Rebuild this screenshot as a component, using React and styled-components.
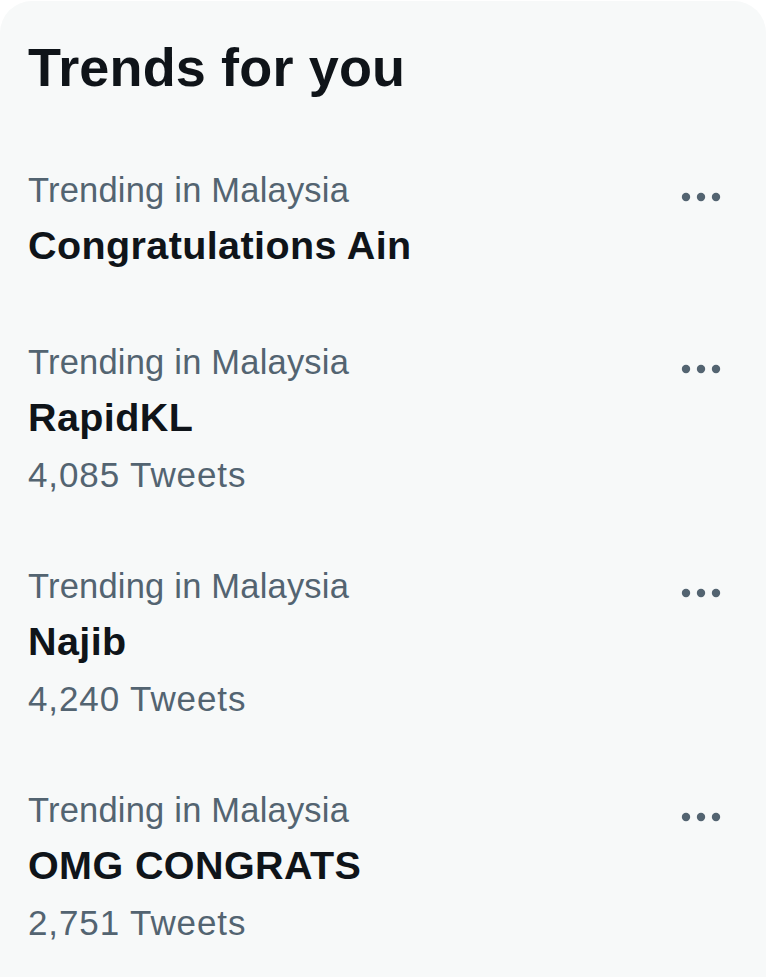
import styled, { createGlobalStyle } from 'styled-components';

const trends = [
  { id: 1, place: 'Trending in Malaysia', name: 'Congratulations Ain' },
  { id: 2, place: 'Trending in Malaysia', name: 'RapidKL', count: '4,085 Tweets' },
  { id: 3, place: 'Trending in Malaysia', name: 'Najib', count: '4,240 Tweets' },
  { id: 4, place: 'Trending in Malaysia', name: 'OMG CONGRATS', count: '2,751 Tweets' }
];

function App () {
  return (
    <>
      <GlobalStyle />
      <Panel>
        <Header>Trends for you</Header>
        {
          trends.map((trend) => {
            return (
              <TrendRow key={trend.id}>
                <TrendText>
                  <Place>{trend.place}</Place>
                  <TrendName>{trend.name}</TrendName>
                  {trend.count && <Count>{trend.count}</Count>}
                </TrendText>
                <MoreButton aria-label='More'>
                  <svg width='44' height='12' viewBox='0 0 44 12'>
                    <circle cx='7' cy='6' r='4.2' fill='#536471' />
                    <circle cx='22' cy='6' r='4.2' fill='#536471' />
                    <circle cx='37' cy='6' r='4.2' fill='#536471' />
                  </svg>
                </MoreButton>
              </TrendRow>
            );
          })
        }
      </Panel>
    </>
  );
}

export default App;

const GlobalStyle = createGlobalStyle`
  html, body {
    margin: 0;
    padding: 0;
    background: #ffffff;
  }
  body {
    font-family: "Liberation Sans", Arial, sans-serif;
  }
`;

const Panel = styled.div`
  margin-top: 1px;
  min-height: 976px;
  background: #f7f9f9;
  border-radius: 32px 32px 0 0;
  display: flex;
  flex-direction: column;
`;

const Header = styled.div`
  padding: 34px 28px 36px;
  font-size: 54px;
  line-height: 64px;
  font-weight: bold;
  letter-spacing: 0.15px;
  color: #0f1419;
`;

const TrendRow = styled.div`
  display: flex;
  justify-content: space-between;
  align-items: flex-start;
  padding: 33px 43px 34px 28px;
`;

const TrendText = styled.div`
  display: flex;
  flex-direction: column;
`;

const Place = styled.div`
  font-size: 34.5px;
  line-height: 44px;
  letter-spacing: 0.2px;
  color: #536471;
`;

const TrendName = styled.div`
  margin-top: 5px;
  font-size: 39.5px;
  line-height: 56px;
  font-weight: bold;
  letter-spacing: 0.4px;
  color: #0f1419;
`;

const Count = styled.div`
  margin-top: 8px;
  font-size: 35px;
  line-height: 44px;
  letter-spacing: 0.9px;
  color: #536471;
`;

const MoreButton = styled.div`
  width: 44px;
  height: 44px;
  margin-top: 7px;
  display: flex;
  align-items: center;
  justify-content: center;
`;
